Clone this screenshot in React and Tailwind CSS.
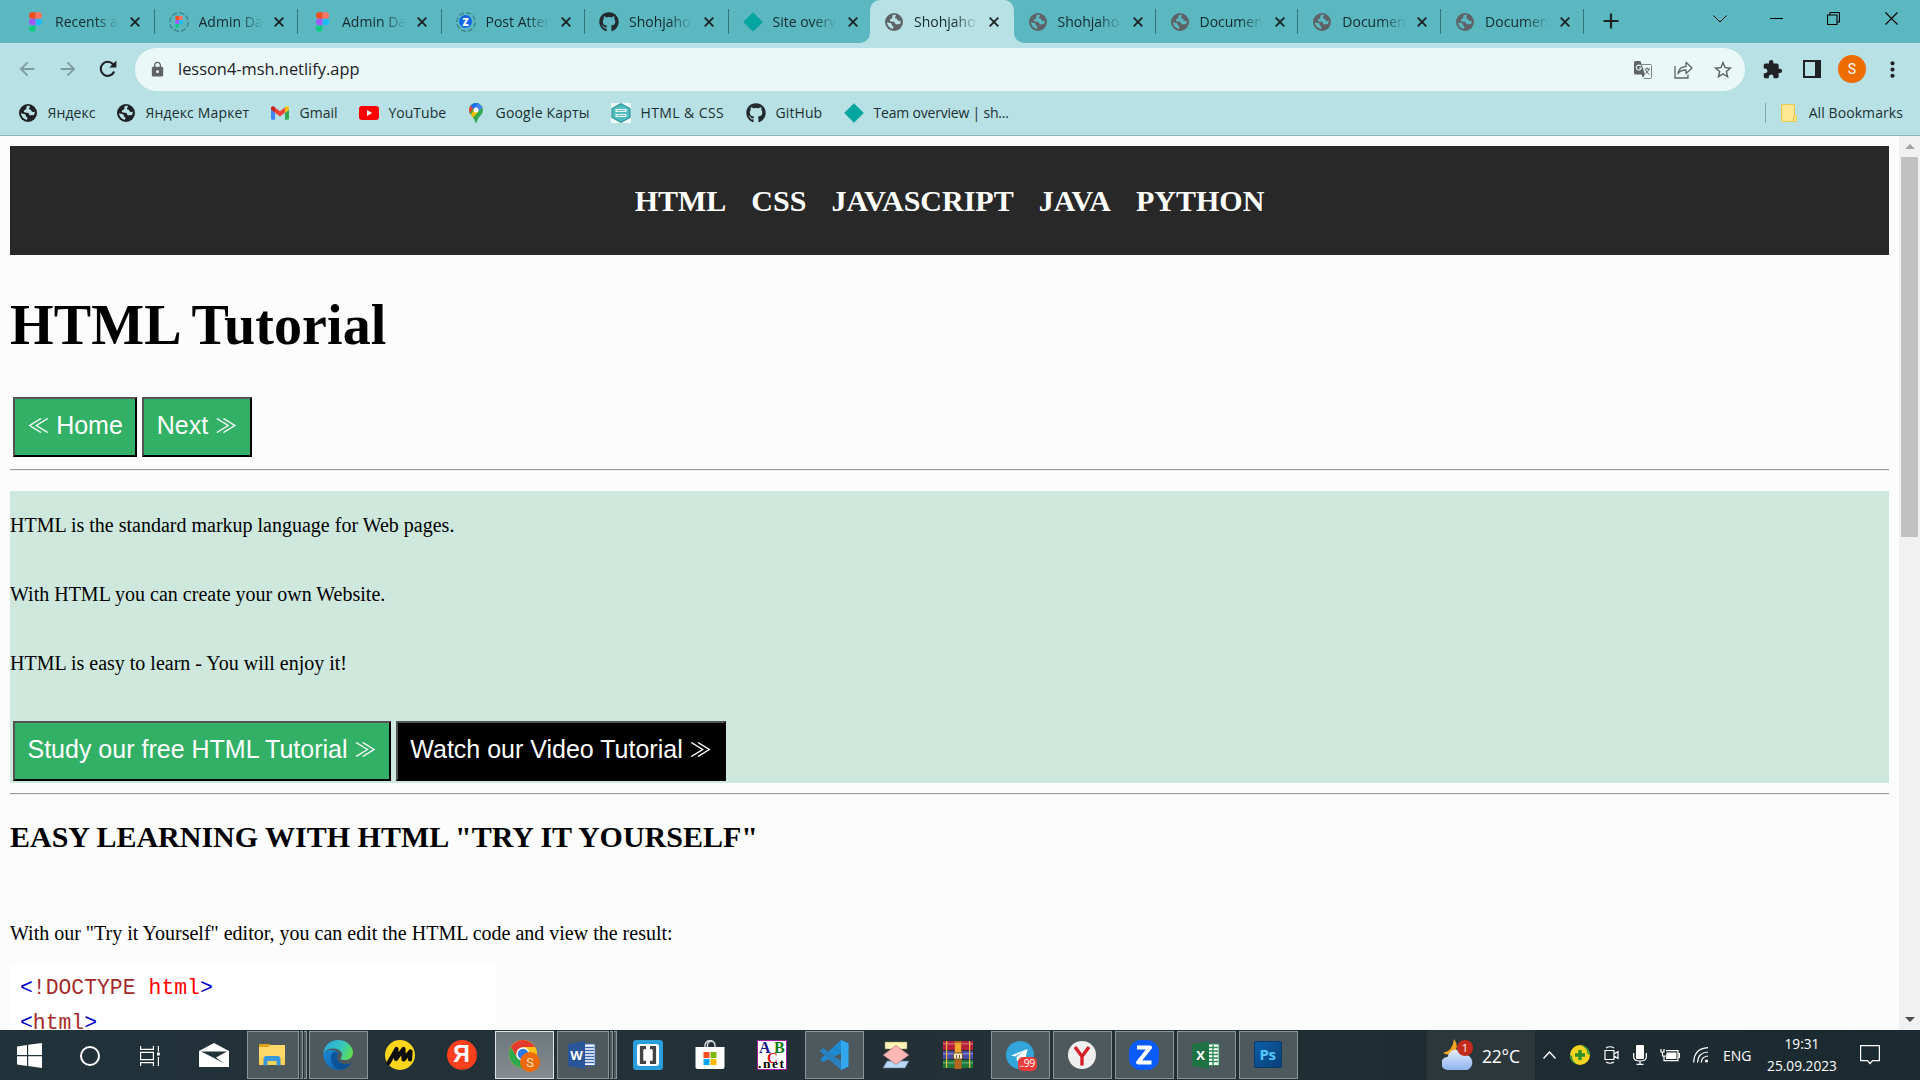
import React from 'react';
import { FaGithub } from 'react-icons/fa';
import { MdArrowBack, MdArrowForward, MdExtension, MdStarBorder, MdMoreVert, MdLock } from 'react-icons/md';

/* ---------- favicons ---------- */

const Figma = ({ className = 'w-[13px] h-[20px]' }) => (
  <svg viewBox="0 0 38 57" className={className}>
    <path fill="#1abcfe" d="M19 28.5a9.5 9.5 0 1 1 19 0 9.5 9.5 0 0 1-19 0z" />
    <path fill="#0acf83" d="M0 47.5A9.5 9.5 0 0 1 9.500 38H19v9.500a9.500 9.500 0 1 1-19 0z" />
    <path fill="#ff7262" d="M19 0v19h9.500a9.500 9.500 0 1 0 0-19H19z" />
    <path fill="#f24e1e" d="M0 9.500A9.500 9.500 0 0 0 9.500 19H19V0H9.500A9.500 9.500 0 0 0 0 9.500z" />
    <path fill="#a259ff" d="M0 28.500A9.500 9.500 0 0 0 9.500 38H19V19H9.500A9.500 9.500 0 0 0 0 28.500z" />
  </svg>
);

const Ring = ({ children }) => (
  <span className="relative flex h-[20px] w-[20px] items-center justify-center">
    <svg viewBox="0 0 20 20" className="absolute inset-0 h-[20px] w-[20px]">
      <circle cx="10" cy="10" r="9.200" fill="none" stroke="#3f858d" strokeWidth="1.400" strokeDasharray="5 2.200" />
    </svg>
    {children}
  </span>
);

const FigmaRing = () => (
  <Ring>
    <Figma className="h-[12px] w-[8px]" />
  </Ring>
);

const ZRing = () => (
  <Ring>
    <span className="relative flex h-[13px] w-[13px] items-center justify-center rounded-full bg-[#1466e8] font-['Open_Sans',sans-serif] text-[10px] font-extrabold leading-none text-white">
      Z
    </span>
  </Ring>
);

const Globe = ({ fill, land }) => (
  <svg viewBox="0 0 18 18" className="h-[18px] w-[18px]">
    <circle cx="9" cy="9" r="9" fill={fill} />
    <path
      fill={land}
      d="M10.800 1.900c-1.800-.5-2.900.1-3.300.9-.5 1 .2 1.500-.2 2.300-.4.700-1.600.6-2.200 1.500-.5.800-.2 1.700.9 2 1.200.3 2.500-.2 3.400.5 1 .8.500 1.800 1.300 2.200.9.500 1.500-.4 2.400-.3.900.1 1.500.400 1.900.100a7.200 7.200 0 0 0 .8-3.600c-.9.600-1.800.7-2.600.200-1-.600-.7-1.500-1.500-2-.8-.400-1.500-.200-1.700-1-.200-1 1.300-1.600 .8-2.800z"
    />
    <path fill={land} d="M2 8.900c1.100.9 2.900.5 4 1.300 1 .7.500 1.800 1.300 2.500.7.500 1.300.7 1.200 1.600-.1.800-.7 1.100-.6 1.700A7.200 7.200 0 0 1 2 8.900z" />
  </svg>
);

const GrayGlobe = () => <Globe fill="#5f6368" land="#5bb8c1" />;
const GrayGlobeActive = () => <Globe fill="#5f6368" land="#b7e1e4" />;
const DarkGlobe = () => <Globe fill="#202124" land="#b7e1e4" />;
const Github = () => <FaGithub className="h-[20px] w-[20px] text-[#24292e]" />;
const Diamond = () => (
  <svg viewBox="0 0 20 20" className="h-[20px] w-[20px]">
    <path fill="#05a6a0" stroke="#05a6a0" strokeWidth="1" strokeLinejoin="round" d="M10 .7L19.300 10 10 19.300.700 10z" />
  </svg>
);
const Gmail = () => (
  <svg viewBox="52 42 88 66" className="h-[14px] w-[18px]">
    <path fill="#4285f4" d="M58 108h14V74L52 59v43c0 3.320 2.690 6 6 6" />
    <path fill="#34a853" d="M120 108h14c3.320 0 6-2.690 6-6V59l-20 15" />
    <path fill="#fbbc04" d="M120 48v26l20-15v-8c0-7.420-8.470-11.650-14.400-7.200" />
    <path fill="#ea4335" d="M72 74V48l24 18 24-18v26L96 92" />
    <path fill="#c5221f" d="M52 51v8l20 15V48l-5.600-4.200c-5.940-4.450-14.400-.220-14.400 7.200" />
  </svg>
);
const Youtube = () => (
  <svg viewBox="0 0 20 14" className="h-[14px] w-[20px]">
    <rect width="20" height="14" rx="3" fill="#f00" />
    <path d="M8 4l5.200 3L8 10z" fill="#fff" />
  </svg>
);
const Pin = () => (
  <svg viewBox="0 0 14 20" className="h-[20px] w-[14px]">
    <defs>
      <clipPath id="pin">
        <path d="M7 0a7 7 0 0 0-7 7c0 2.200.9 3.700 2.400 5.600C4.200 14.800 5.500 16.500 6.200 19c.2.700.4 1 .8 1s.6-.300.8-1c.7-2.500 2-4.200 3.800-6.400C13.100 10.700 14 9.200 14 7a7 7 0 0 0-7-7z" />
      </clipPath>
    </defs>
    <g clipPath="url(#pin)">
      <path fill="#34a853" d="M0 0h14v20H0z" />
      <path fill="#fbbc04" d="M0 14L5 7 9 9 3 16z" />
      <path fill="#ea4335" d="M0 0l5 4.500L0 11z" />
      <path fill="#1a73e8" d="M1 2.200L5 6l5.500-6H3z" />
      <path fill="#4285f4" d="M9.500 0L4.500 6l4 3L14 4z" />
    </g>
    <circle cx="7" cy="7" r="2.500" fill="#fff" />
  </svg>
);
const Hexagon = () => (
  <svg viewBox="0 0 20 20" className="h-[20px] w-[20px]">
    <path fill="#eef6f6" d="M0 0h20v20H0z" />
    <path fill="#4dbdc0" stroke="#2f9396" strokeWidth="1.200" d="M10 .8l9 4.700v9L10 19.200 1 14.500v-9z" />
    <path fill="#eaf7f7" d="M4.500 6h11v3h-11zM4.500 11h11v3h-11z" />
    <path stroke="#3fa9ac" strokeWidth=".8" d="M6 7.500h8M6 12.500h8" />
  </svg>
);

/* ---------- browser chrome ---------- */

const Close = () => (
  <svg viewBox="0 0 10 10" className="h-[10px] w-[10px]">
    <path d="M.7.7l8.600 8.600M9.300.7L.7 9.300" stroke="#1d2426" strokeWidth="1.900" />
  </svg>
);

const tabs = [
  { icon: Figma, text: 'Recents a', w: 'w-[143.500px]' },
  { icon: FigmaRing, text: 'Admin Da', w: 'w-[143.500px]' },
  { icon: Figma, text: 'Admin Da', w: 'w-[143.500px]' },
  { icon: ZRing, text: 'Post Atter', w: 'w-[143.500px]' },
  { icon: Github, text: 'Shohjaho', w: 'w-[143.500px]' },
  { icon: Diamond, text: 'Site overv', noSep: true, w: 'w-[141.500px]' },
  { icon: GrayGlobeActive, text: 'Shohjaho', active: true, w: 'w-[143.500px]' },
  { icon: GrayGlobe, text: 'Shohjaho', w: 'w-[142px]' },
  { icon: GrayGlobe, text: 'Documen', w: 'w-[142.800px]' },
  { icon: GrayGlobe, text: 'Documen', w: 'w-[142.800px]' },
  { icon: GrayGlobe, text: 'Documen', w: 'w-[142.800px]' },
];

const Tab = ({ icon: Icon, text, active, noSep, w }) => (
  <div className={`relative flex h-[43px] shrink-0 items-center pl-[14px] ${w} ${active ? 'rounded-t-[10px] bg-[#b7e1e4]' : ''}`}>
    {active && (
      <>
        <svg viewBox="0 0 10 10" className="absolute bottom-0 -left-[10px] h-[10px] w-[10px]">
          <path d="M10 0v10H0A10 10 0 0 0 10 0z" fill="#b7e1e4" />
        </svg>
        <svg viewBox="0 0 10 10" className="absolute -right-[10px] bottom-0 h-[10px] w-[10px]">
          <path d="M0 0v10h10A10 10 0 0 1 0 0z" fill="#b7e1e4" />
        </svg>
      </>
    )}
    <span className="flex w-5 justify-center">
      <Icon />
    </span>
    <span className="ml-[10px] w-[64px] whitespace-nowrap text-[14px] text-[#14292c] [mask-image:linear-gradient(to_right,black_62%,transparent)]">
      {text}
    </span>
    <span className="ml-[11px]">
      <Close />
    </span>
    {!active && !noSep && <span className="absolute top-[9px] right-0 h-[25px] w-px bg-[#35737a]" />}
  </div>
);

const bookmarks = [
  { icon: DarkGlobe, text: 'Яндекс', w: 'w-[98px] tracking-[0.1px]' },
  { icon: DarkGlobe, text: 'Яндекс Маркет', w: 'w-[154px] tracking-[0.150px]' },
  { icon: Gmail, text: 'Gmail', w: 'w-[89px]' },
  { icon: Youtube, text: 'YouTube', w: 'w-[107px]' },
  { icon: Pin, text: 'Google Карты', w: 'w-[145px] tracking-[0.2px]' },
  { icon: Hexagon, text: 'HTML & CSS', w: 'w-[135px] tracking-[0.400px]' },
  { icon: Github, text: 'GitHub', w: 'w-[98px] tracking-[0.1px]' },
  { icon: Diamond, text: 'Team overview | sh...', w: 'w-[180px] tracking-[-0.2px]' },
];

const BrowserBar = () => (
  <header className="shrink-0 font-['Open_Sans','Noto_Sans',sans-serif]">
    <div className="flex h-[43px] bg-[#5bb8c1] pl-[11px]">
      {tabs.map((t, i) => (
        <Tab key={i} {...t} />
      ))}
      <svg viewBox="0 0 16 16" className="mt-[13px] ml-[19px] h-4 w-4">
        <path d="M8 .5v15M.5 8h15" stroke="#1d2426" strokeWidth="2.200" />
      </svg>
      <div className="ml-auto flex h-[37px] items-center text-black">
        <span className="flex w-[57px] justify-center">
          <svg viewBox="0 0 14 8" className="h-2 w-[14px]">
            <path d="M.5.5L7 7 13.500.5" fill="none" stroke="currentColor" />
          </svg>
        </span>
        <span className="flex w-[57px] justify-center">
          <span className="h-px w-[13px] bg-black" />
        </span>
        <span className="flex w-[57px] justify-center">
          <svg viewBox="0 0 13 13" className="h-[13px] w-[13px]">
            <path d="M.5 3h9.500v9.500H.5zM3 3V.5h9.500V10H10" fill="none" stroke="currentColor" strokeWidth="1.100" />
          </svg>
        </span>
        <span className="flex w-[58px] justify-center">
          <svg viewBox="0 0 13 13" className="h-[13px] w-[13px]">
            <path d="M.5.5l12 12M12.500.5l-12 12" stroke="currentColor" strokeWidth="1.100" />
          </svg>
        </span>
      </div>
    </div>

    <div className="flex h-[53px] items-center bg-[#b7e1e4] pr-[8px] pb-px pl-[7px]">
      <span className="flex w-10 justify-center text-[#7f9b9f]">
        <MdArrowBack className="h-[22px] w-[22px]" />
      </span>
      <span className="flex w-[41px] justify-center text-[#7f9b9f]">
        <MdArrowForward className="h-[22px] w-[22px]" />
      </span>
      <span className="flex w-10 justify-center">
        <svg viewBox="0 0 18 18" className="h-[18px] w-[18px]">
          <path d="M15.200 11.500A7 7 0 1 1 14 4.200l1.500 1.600" fill="none" stroke="#202124" strokeWidth="2.100" />
          <path d="M17.400.6v7h-7z" fill="#202124" />
        </svg>
      </span>
      <div className="mt-px ml-[7px] flex h-[43px] grow items-center rounded-full bg-[#ebf8f8] pr-[2px] pl-[14px]">
        <MdLock className="h-[17px] w-[17px] text-[#5f6368]" />
        <span className="ml-[12px] text-[16.400px] text-[#202124]">lesson4-msh.netlify.app</span>
        <div className="ml-auto flex text-[#5f6368]">
          <span className="flex w-10 items-center justify-center">
            <svg viewBox="0 0 18 18" className="h-[18px] w-[18px]">
              <path d="M8 3.500h8.500q1 0 1 1v12q0 1-1 1H9.800" fill="none" stroke="#7d8488" />
              <path d="M1.500 0h5l4.500 13.500H1.500Q0 13.500 0 12V1.500Q0 0 1.500 0zM7.500 13.500h3.300L9 17z" fill="#5f6368" />
              <path d="M7 5.300A2.500 2.500 0 1 0 7.300 7H5" fill="none" stroke="#ebf8f8" strokeWidth="1.200" />
              <path d="M10.500 8h5.500M13 6.500V8m2 0q-.8 3-3.500 4.500M11.500 9q1 2.500 4 4.500" fill="none" stroke="#5f6368" />
            </svg>
          </span>
          <span className="flex w-10 items-center justify-center">
            <svg viewBox="0 0 19 18" className="h-[18px] w-[19px]">
              <path d="M1 5v12h13v-3.500" fill="none" stroke="currentColor" strokeWidth="1.300" />
              <path d="M4 12.500q.8-6.500 8-7V1.300L18 7l-6 5.500V9q-5-.2-8 3.500z" fill="none" stroke="currentColor" strokeWidth="1.300" strokeLinejoin="round" />
            </svg>
          </span>
          <span className="flex w-10 items-center justify-center">
            <MdStarBorder className="h-[22px] w-[22px]" />
          </span>
        </div>
      </div>
      <span className="ml-[7px] flex w-10 justify-center">
        <MdExtension className="h-[21px] w-[21px] text-[#202124]" />
      </span>
      <span className="flex w-10 justify-center">
        <span className="h-[18px] w-[18px] border-[2.500px] border-r-[6px] border-[#202124]" />
      </span>
      <span className="flex w-10 justify-center">
        <span className="flex h-7 w-7 items-center justify-center rounded-full bg-[#ef6c00] font-[Roboto,sans-serif] text-[14px] text-white">S</span>
      </span>
      <span className="flex w-10 justify-center">
        <MdMoreVert className="h-[25px] w-[25px] text-[#202124]" />
      </span>
    </div>

    <div className="flex h-[40px] items-center border-b border-[#8fb3b8] bg-[#b7e1e4] pb-[6px] pl-[18px] text-[14px] text-[#1c3033]">
      {bookmarks.map(({ icon: Icon, text, w }, i) => (
        <div key={i} className={`flex shrink-0 items-center gap-[9.500px] whitespace-nowrap ${w}`}>
          <span className="flex w-5 justify-center">
            <Icon />
          </span>
          {text}
        </div>
      ))}
      <div className="ml-auto flex items-center border-l border-[#7fa9ae] pr-[17px] pl-[14.500px] tracking-[0.080px]">
        <svg viewBox="0 0 16 18" className="h-[18px] w-4">
          <path d="M.5.5h13v11h2v6H.5z" fill="#ffe793" stroke="#ebcb52" />
          <path d="M12.500 17v-4l1-1.500" fill="none" stroke="#e5b93c" />
        </svg>
        <span className="ml-3 leading-[20px]">All Bookmarks</span>
      </div>
    </div>
  </header>
);

/* ---------- web page ---------- */

const bevel = 'border-2 border-t-[#545454] border-l-[#545454] border-r-black border-b-black';

const PageButton = ({ children, color, w }) => (
  <button className={`h-[60px] ${w} ${bevel} ${color} pt-3 pb-4 text-center align-top font-['Liberation_Sans',Arial,'Noto_Sans_CJK_JP',sans-serif] text-[25px] leading-7 whitespace-nowrap text-white`}>
    {children}
  </button>
);

const Arrows = ({ children }) => (
  <span className="inline-block scale-y-[.88] font-['Noto_Sans_CJK_JP',sans-serif] text-[22px] leading-none">{children}</span>
);

const Rule = ({ className }) => <div className={`h-[2px] shrink-0 border-t border-b border-t-[#9a9a9a] border-b-[#eee] ${className}`} />;

const Page = () => (
  <main className="flex h-full w-[1899px] shrink-0 flex-col overflow-hidden bg-[#fcfcfc] px-[10px] pt-[10px] font-['Liberation_Serif','Times_New_Roman',serif] text-[20px] leading-[23px] text-black">
    <nav className="flex h-[109px] shrink-0 justify-center gap-[25px] bg-[#282828] pt-[38px] text-[30px] leading-[34px] font-bold text-white">
      <span>HTML</span>
      <span>CSS</span>
      <span>JAVASCRIPT</span>
      <span>JAVA</span>
      <span>PYTHON</span>
    </nav>
    <h1 className="mt-[38px] text-[56px] leading-[64px] font-bold tracking-[0.120px]">HTML Tutorial</h1>
    <div className="mt-[40px] flex gap-[5px] pl-[3px]">
      <PageButton w="w-[124px]" color="bg-[#32b166]">
        <Arrows>≪</Arrows> Home
      </PageButton>
      <PageButton w="w-[110px]" color="bg-[#32b166]">
        Next <Arrows>≫</Arrows>
      </PageButton>
    </div>
    <Rule className="mt-[12px]" />
    <section className="mt-[20px] h-[292px] shrink-0 bg-[#cfe8de] pt-[23px]">
      <p>HTML is the standard markup language for Web pages.</p>
      <p className="mt-[46px]">With HTML you can create your own Website.</p>
      <p className="mt-[46px]">HTML is easy to learn - You will enjoy it!</p>
      <div className="mt-[46px] flex gap-[5px] pl-[3px]">
        <PageButton w="w-[378px]" color="bg-[#32b166]">
          Study our free HTML Tutorial <Arrows>≫</Arrows>
        </PageButton>
        <PageButton w="w-[330px]" color="bg-black">
          Watch our Video Tutorial <Arrows>≫</Arrows>
        </PageButton>
      </div>
    </section>
    <Rule className="mt-[10px]" />
    <h2 className="mt-[25px] text-[30px] leading-[34px] font-bold">EASY LEARNING WITH HTML "TRY IT YOURSELF"</h2>
    <p className="mt-[68px]">With our "Try it Yourself" editor, you can edit the HTML code and view the result:</p>
    <div className="mt-[20px] h-[200px] w-[486px] shrink-0 bg-white pt-[6px] pl-[10px] font-['Liberation_Mono',monospace] text-[21.400px] leading-[35px] text-[#0000cd]">
      <div className="flex">
        <span>{'<'}</span>
        <span className="text-[#a52a2a]">!DOCTYPE</span>
        <span className="ml-[13px] text-[#f00]">html</span>
        <span>{'>'}</span>
      </div>
      <div className="flex">
        <span>{'<'}</span>
        <span className="text-[#a52a2a]">html</span>
        <span>{'>'}</span>
      </div>
    </div>
  </main>
);

const Scrollbar = () => (
  <aside className="flex w-[21px] flex-col items-center justify-between bg-[#f1f1f1]">
    <div className="flex flex-col items-center">
      <span className="mt-[8px] mb-[8px] border-x-[5px] border-b-[5px] border-x-transparent border-b-[#a3a3a3]" />
      <span className="h-[380px] w-[17px] bg-[#c1c1c1]" />
    </div>
    <span className="mb-[8px] border-x-[5px] border-t-[5px] border-x-transparent border-t-[#505050]" />
  </aside>
);

/* ---------- taskbar ---------- */

const Svg = ({ children, w = 'w-[30px]' }) => (
  <svg viewBox="0 0 30 30" className={`h-[30px] ${w}`}>
    {children}
  </svg>
);

const Explorer = () => (
  <Svg>
    <path fill="#e0a11b" d="M2 4h11v5H2z" />
    <path fill="#ffd869" d="M2 7h9l2-2h15v20H2z" />
    <path fill="#ffc93c" d="M2 18h26v7H2z" opacity=".5" />
    <path fill="#3b97dc" d="M6.500 25.500V19q0-3 3-3h11q3 0 3 3v6.500h-4V21h-9v4.500z" />
  </Svg>
);
const Edge = () => (
  <Svg>
    <defs>
      <linearGradient id="e1" x1="0" y1="0.200" x2="1" y2="0.500">
        <stop offset="0" stopColor="#2aa6e0" />
        <stop offset=".6" stopColor="#36c6c0" />
        <stop offset="1" stopColor="#5fdc52" />
      </linearGradient>
      <linearGradient id="e2" x1="0" y1="0" x2="1" y2="1">
        <stop offset="0" stopColor="#1c8ad6" />
        <stop offset="1" stopColor="#0c59a4" />
      </linearGradient>
    </defs>
    <path fill="url(#e2)" d="M.2 14C.5 23 7 30 15.500 30c6 0 10.500-3 12.800-7-4 2-10 2-13-2-2-3-1.500-6 .5-8C12 9 3 8.500.2 14z" />
    <path fill="#0b4a8c" d="M9 13c-3 6 0 15 8.500 16.800 5-.4 8.600-3 10.800-6.800-4 2-10 2-13-2-2-3-1.500-6 .5-8-2-1.500-5-1.500-6.800 0z" opacity=".75" />
    <path fill="url(#e1)" d="M.2 14C.8 6 7 0 15 0c9 0 15 6.500 15 12.500 0 5-4 7.500-8 7.500-4 0-5-1.500-4-2.500 2-2.500 1-5.500-2-7.500C11 7.500 3 8 .2 14z" />
  </Svg>
);
const YellowM = () => (
  <Svg>
    <circle cx="15" cy="15" r="15" fill="#fdd61b" />
    <path d="M3.500 23L11.500 9l-.5 10 7.500-10v10.500l7-8-.5 8" fill="none" stroke="#0d0d0d" strokeWidth="4.200" strokeLinejoin="round" strokeLinecap="round" />
  </Svg>
);
const Ya = () => (
  <span className="flex h-[30px] w-[30px] items-center justify-center rounded-full bg-[#fc3f1d] font-['Liberation_Sans',sans-serif] text-[23px] font-bold leading-none text-white">Я</span>
);
const Chrome = () => (
  <svg viewBox="0 0 32 32" className="mt-[2px] h-8 w-8">
    <circle cx="15" cy="14" r="14" fill="#fbc116" />
    <path fill="#e33b2e" d="M2.900 7A14 14 0 0 1 27.100 7H15l-6 10.500z" />
    <path fill="#2da94f" d="M2.900 7A14 14 0 0 0 15 28l6-10.500L9 17.500z" />
    <circle cx="15" cy="14" r="6.800" fill="#fff" />
    <circle cx="15" cy="14" r="5.300" fill="#2f78e6" />
    <circle cx="22" cy="22" r="10" fill="#ec6a07" />
    <text x="22" y="27" fontSize="13" fill="#ffe0c2" textAnchor="middle" fontFamily="Roboto, sans-serif">S</text>
  </svg>
);
const Office = ({ letter, dark, light, grid }) => (
  <Svg>
    <path fill="#fff" stroke={light} d="M15 4h13v21.500H15z" />
    <path stroke={light} strokeWidth="1.400" d={grid ? 'M17 7.500h10M17 11h10M17 14.500h10M17 18h10M17 21.500h10M22 5v20' : 'M18 7.500h9M18 10.500h9M18 13.500h9M18 16.500h9M18 19.500h9M18 22.500h9'} />
    <path fill={dark} d="M1 4l17-3v28L1 26z" />
    <text x="9.500" y="19.500" fontSize="13" fontWeight="700" fill="#fff" textAnchor="middle" fontFamily="Open Sans, sans-serif">{letter}</text>
  </Svg>
);
const Word = () => <Office letter="W" dark="#2a5699" light="#3a67b0" />;
const Excel = () => <Office letter="X" dark="#1f7244" light="#2c8a56" grid />;
const Brackets = () => (
  <Svg>
    <rect width="30" height="30" rx="3" fill="#2a9ddb" />
    <rect x="4" y="4" width="22" height="22" rx="3" fill="#fff" />
    <path d="M13 7.600H8.600v14.800H13M17 7.600h4.400v14.800H17" fill="none" stroke="#444" strokeWidth="3.400" />
  </Svg>
);
const Store = () => (
  <Svg>
    <path d="M10 9V5.500a5 5 0 0 1 10 0V9M12.500 9V4a4 4 0 0 1 7.500 0" fill="none" stroke="#d8dcdd" strokeWidth="1.400" />
    <path fill="#fff" d="M.5 7h29v20q0 2-2 2h-25q-2 0-2-2z" />
    <path fill="#f25022" d="M8.500 12h6v6h-6z" />
    <path fill="#7fba00" d="M15.500 12h6v6h-6z" />
    <path fill="#00a4ef" d="M8.500 19h6v6h-6z" />
    <path fill="#ffb900" d="M15.500 19h6v6h-6z" />
  </Svg>
);
const Abc = () => (
  <svg viewBox="0 0 30 30" className="h-[30px] w-[30px]" fontFamily="Liberation Serif, serif" fontWeight="700">
    <path fill="#fff" stroke="#a020a0" d="M.5.5h29v29H.5z" />
    <text x="2" y="13" fontSize="16" fill="#17178c">A</text>
    <text x="17" y="13" fontSize="16" fill="#137a1c">B</text>
    <text x="10" y="23" fontSize="15" fill="#e01414">C</text>
    <text x="1" y="28" fontSize="13.500" fill="#000" textLength="26">.net</text>
  </svg>
);
const Vscode = () => (
  <Svg>
    <path fill="#1f8ad0" d="M1 19.500L22 0l7.500 3.500v6L4 22z" />
    <path fill="#2a7fbf" d="M1 10.500l3-2.500 25.500 18.500L22 30 1 11.500z" />
    <path fill="#33a7ee" d="M22 0l7.500 3.500v23L22 30z" />
  </Svg>
);
const Flow = () => (
  <Svg>
    <path fill="#fff6b8" stroke="#8f8b5d" strokeWidth=".6" d="M4 2h22v7H4z" />
    <path fill="#b7d8f7" stroke="#5b7690" strokeWidth=".6" d="M6 21h22l-4 7H2z" />
    <path fill="#fdb7b7" stroke="#96686b" strokeWidth=".6" d="M15 5.500L28 15 15 24.500 2 15z" />
  </Svg>
);
const Winrar = () => (
  <Svg>
    <path fill="#b71f38" d="M0 1h30v9H0z" />
    <path fill="#4a49a8" d="M0 11h30v8H0z" />
    <path fill="#1c7a3a" d="M0 20h30v8H0z" />
    <path fill="#fff" opacity=".3" d="M0 3h30v1.500H0zM0 13h30v1.500H0zM0 22h30v1.500H0z" />
    <path fill="#e7bd3d" d="M3 1h1.200v27H3zM26 1h1.200v27H26z" />
    <path fill="#b5651d" d="M11.500 1h7v28h-7z" />
    <path fill="#f3a72e" d="M12 3h6v10h-6z" />
    <rect x="10.500" y="13" width="9" height="6" rx="1" fill="#f4ead0" stroke="#6d5420" />
    <path stroke="#6d5420" d="M13.500 15v3M16.500 15v3" />
  </Svg>
);
const Telegram = () => (
  <span className="relative flex">
    <svg viewBox="0 0 28 28" className="h-7 w-7">
      <circle cx="14" cy="14" r="14" fill="#33a4dc" />
      <path fill="#fff" d="M5 14.500L21.500 8l-3 14-5-4-2.500 2.500-.5-4.500 7-5.500-8.500 5z" />
    </svg>
    <span className="absolute top-[16px] left-[12px] flex h-[14px] w-[19px] items-center justify-center rounded-[5px] bg-[#ec3b3b] font-['Open_Sans',sans-serif] text-[10.500px] leading-none tracking-[-0.500px] text-white">
      ..99
    </span>
  </span>
);
const YBrowser = () => (
  <Svg>
    <circle cx="15" cy="15" r="14" fill="#efefef" />
    <path d="M8 7l7 9.500L22 7M15 16v9.500" fill="none" stroke="#d62027" strokeWidth="3.400" />
  </Svg>
);
const Zoom = () => (
  <Svg>
    <rect width="30" height="30" rx="12" fill="#0b5cff" />
    <path d="M8 7.500h13L9 22.500h13.500" fill="none" stroke="#fff" strokeWidth="4" strokeLinejoin="round" />
  </Svg>
);
const Ps = () => (
  <span className="flex h-[27px] w-[28px] items-center justify-center rounded-[2px] border border-[#0a3a66] bg-gradient-to-br from-[#0a5fa8] to-[#0a3f78] pb-px font-['Open_Sans',sans-serif] text-[15px] font-bold leading-none tracking-[-0.500px] text-[#52c8ff]">
    Ps
  </span>
);

const apps = [
  { icon: Explorer, open: true, stack: true },
  { icon: Edge, open: true },
  { icon: YellowM },
  { icon: Ya },
  { icon: Chrome, focus: true },
  { icon: Word, open: true, stack: true },
  { icon: Brackets },
  { icon: Store },
  { icon: Abc },
  { icon: Vscode, open: true },
  { icon: Flow },
  { icon: Winrar },
  { icon: Telegram, open: true },
  { icon: YBrowser, open: true },
  { icon: Zoom, open: true },
  { icon: Excel, open: true },
  { icon: Ps, open: true },
];

const tileStyle = (a) => {
  if (a.focus) return 'w-[59px] border border-[#dfe3e4] bg-gradient-to-b from-[#6d777b] to-[#858c90]';
  if (a.open) return `${a.stack ? 'w-[52px]' : 'w-[59px]'} border border-[#8b9497] bg-[#4e595e]`;
  return 'w-[59px]';
};

const TaskApp = (a) => {
  const Icon = a.icon;
  return (
    <div className="flex w-[62px] shrink-0 pl-[1.500px]">
      <div className={`flex h-[48px] items-center justify-center pr-[2px] pb-px ${tileStyle(a)}`}>
        <Icon />
      </div>
      {a.stack && (
        <>
          <span className="ml-px h-[48px] w-[3px] border-y border-r border-[#8b9497] bg-[#4e595e]" />
          <span className="ml-px h-[48px] w-[3px] border-y border-r border-[#8b9497] bg-[#4e595e]" />
        </>
      )}
    </div>
  );
};

const Taskbar = () => (
  <footer className="flex h-[50px] shrink-0 bg-gradient-to-r from-[#22323a] via-[#233036] to-[#1b2a30] pt-px font-['Open_Sans',sans-serif] text-white">
    <span className="flex w-[60px] items-center justify-center pr-px pb-px">
      <svg viewBox="0 0 25 25" className="h-[25px] w-[25px]" fill="#fff">
        <path d="M0 3.500l10-1.500v10H0zM11.200 1.800L25 0v12H11.200zM0 13.200h10V23L0 21.500zM11.200 13.200H25V25l-13.800-2z" />
      </svg>
    </span>
    <span className="flex w-[60px] items-center justify-center">
      <span className="h-[20px] w-[20px] rounded-full border-[2.500px] border-white" />
    </span>
    <span className="flex w-[60px] items-center justify-center">
      <svg viewBox="0 0 20 20" className="h-[20px] w-[20px]" fill="none" stroke="#fff" strokeWidth="1.200">
        <path d="M.6 0v3.400h12.800V0M.6 20v-3.400h12.800V20M.6 6.400h12.800v7.200H.6zM18.400 0v5.500M18.400 11v9" />
        <path d="M17 6.500h2.800v3H17z" fill="#fff" stroke="none" />
      </svg>
    </span>
    <span className="flex w-[65.500px] items-center justify-center pl-[3px]">
      <svg viewBox="0 0 30 24" className="mb-[2px] h-6 w-[30px]">
        <path fill="#fff" d="M0 8L15 0l15 8v16H0z" />
        <path fill="#22323a" d="M2 8.500h26l-11 6 8 6L15 15z" />
      </svg>
    </span>
    {apps.map((a, i) => (
      <TaskApp key={i} {...a} />
    ))}
    <div className="-mt-px ml-auto flex w-[108px] items-center bg-[#2c373c] pb-px pl-[15px]">
      <svg viewBox="0 0 32 32" className="h-8 w-8">
        <defs>
          <linearGradient id="cl" x1="0" y1="0" x2="0" y2="1">
            <stop offset="0" stopColor="#e3edfc" />
            <stop offset="1" stopColor="#8fb4f0" />
          </linearGradient>
        </defs>
        <path fill="#f5a524" d="M12 0q6 8-1 14-4 3-10 0 10-2 11-14z" />
        <path fill="url(#cl)" d="M6 31a6.500 6.500 0 0 1-.5-13A9.500 9.500 0 0 1 23 15.500 8 8 0 0 1 25 31z" />
        <circle cx="23" cy="9" r="8" fill="#c42b1c" />
        <text x="23" y="13" fontSize="11" fill="#fff" textAnchor="middle" fontFamily="Open Sans, sans-serif">1</text>
      </svg>
      <span className="mt-[3px] ml-[8px] text-[17.500px] tracking-[-0.200px]">22°C</span>
    </div>
    <div className="flex w-[385px] items-center pb-px">
      <svg viewBox="0 0 13 8" className="ml-[8px] h-2 w-[13px]">
        <path d="M.5 7.500l6-6.500 6 6.500" fill="none" stroke="#fff" strokeWidth="1.400" />
      </svg>
      <svg viewBox="0 0 20 20" className="ml-[14px] h-5 w-5">
        <circle cx="10" cy="10" r="10" fill="#f6d320" />
        <path d="M0 10a10 10 0 0 0 7 9.500Q1 15 2.500 11zM20 10a10 10 0 0 0-9-10q7 4 6.500 9z" fill="#2d9c3a" />
        <path d="M10 5v10M5 10h10" stroke="#2d8f2a" strokeWidth="3.400" />
      </svg>
      <svg viewBox="0 0 15 18" className="ml-[14px] h-[18px] w-[15px]" fill="none" stroke="#fff" strokeWidth="1.200">
        <path d="M1 4.500h9v9H1zM10 8l4-2.500v7L10 10M2 2q4-2.500 8 0M2 16q4 2.500 8 0" />
      </svg>
      <svg viewBox="0 0 14 20" className="ml-[14px] h-5 w-[14px]" fill="none" stroke="#fff" strokeWidth="1.200">
        <rect x="3" y="0" width="8" height="14" rx="1" fill="#fff" stroke="none" />
        <path d="M.7 8v4q0 4 6.300 4t6.300-4V8M7 16v3M3.500 19.300h7" />
      </svg>
      <svg viewBox="0 0 20 14" className="ml-[13px] h-[14px] w-5" fill="none" stroke="#fff" strokeWidth="1.200">
        <path d="M6 2.600h12v10H4V8M18.500 5.500h1v4h-1M1 1v3h3V1M2.500 4v4H6" />
        <path d="M6.500 4.500h10v6.500H6z" fill="#fff" stroke="none" />
      </svg>
      <svg viewBox="0 0 16 16" className="ml-[13px] h-4 w-4" fill="none" stroke="#fff" strokeWidth="1.200">
        <path d="M.7 15.500Q1 1.500 15 .7M4.500 15.500Q5 5.500 15 5M8.300 15.500Q8.500 9.500 15 9" />
        <circle cx="13.500" cy="14" r="1.600" fill="#fff" stroke="none" />
      </svg>
      <span className="ml-[14px] w-[30px] text-[14px]">ENG</span>
      <span className="ml-[10px] flex w-[78px] flex-col items-center text-[13.700px] leading-[22.500px]">
        <span>19:31</span>
        <span>25.09.2023</span>
      </span>
      <svg viewBox="0 0 20 20" className="ml-[19px] h-5 w-5" fill="none" stroke="#fff" strokeWidth="1.200">
        <path d="M.6.6h18.800v15h-6.800L10 18.500l-2.600-2.900H.6z" />
      </svg>
    </div>
  </footer>
);

export default function App() {
  return (
    <div className="flex h-[1080px] w-[1920px] flex-col overflow-hidden">
      <BrowserBar />
      <div className="flex h-[894px] shrink-0">
        <Page />
        <Scrollbar />
      </div>
      <Taskbar />
    </div>
  );
}
